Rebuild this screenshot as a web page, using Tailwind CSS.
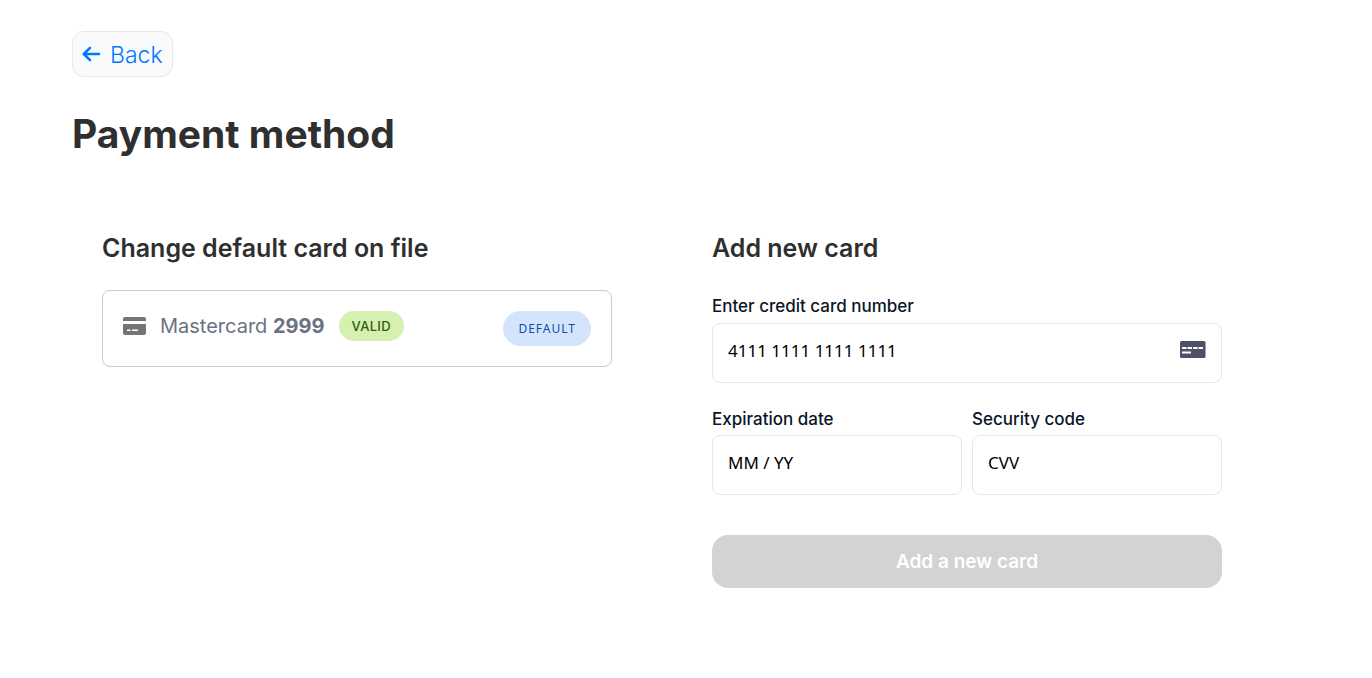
<!DOCTYPE html>
<html lang="en">
<head>
  <meta charset="UTF-8">
  <meta name="viewport" content="width=device-width, initial-scale=1.0">
  <title>Payment method</title>
  <script src="https://cdn.jsdelivr.net/npm/@tailwindcss/browser@4"></script>
</head>
<body class="bg-white font-['Inter',sans-serif] text-[#2f2f2f]">

  <main class="pl-[72px] pr-20 pt-[31px] pb-10">
    <a href="#" class="inline-flex items-center gap-2 h-[46px] pl-2 pr-[9px] pt-0.5 rounded-xl border border-gray-200 bg-gray-50 text-[#0078ff] text-[23px] font-light">
      <svg class="w-[21px] h-6" viewBox="0 0 21 24" fill="none" stroke="currentColor" stroke-width="2.6" stroke-linecap="round" stroke-linejoin="round" aria-hidden="true">
        <path d="M18 11H3M9 4.800L2.800 11L9 17.200"/>
      </svg>
      Back
    </a>

    <h1 class="mt-8 text-[39px] leading-[50px] font-bold">Payment method</h1>

    <div class="grid grid-cols-2 mt-[73px]">
      <section class="pl-[30px] pr-[70px]">
        <h2 class="text-[25px] leading-8 font-semibold">Change default card on file</h2>
        <div class="flex items-start mt-[26px] px-5 py-5 h-[77px] rounded-lg border border-[#cccccc]">
          <svg class="w-[23px] h-[18px] mt-[6px]" viewBox="0 0 23 18" aria-hidden="true">
            <path fill="#757575" d="M2 0h19A2 2 0 0 1 23 2V4H0V2A2 2 0 0 1 2 0zM0 7h23v9a2 2 0 0 1-2 2h-19A2 2 0 0 1 0 16z"/>
            <path stroke="#ffffff" stroke-width="1.4" d="M4 13.300h3.500M9 13.300h6"/>
          </svg>
          <p class="ml-[14px] text-xl leading-[30px] text-gray-500">Mastercard <b class="font-bold">2999</b></p>
          <span class="ml-[14px] px-[13px] rounded-full bg-[#d6f0b1] text-[#2f5e0c] text-[13px] leading-[30px] font-medium tracking-wide">VALID</span>
          <span class="ml-auto px-[15px] rounded-full bg-[#d4e4fc] text-[#0d4eae] text-xs leading-[35px] font-['Noto_Sans',sans-serif] tracking-[1px]">DEFAULT</span>
        </div>
      </section>

      <section class="pl-[30px] pr-[70px]">
        <h2 class="text-[25px] leading-8 font-semibold">Add new card</h2>
        <form class="mt-[29px] text-[#0b1527]">
          <label for="number" class="block text-[17px] leading-[26px] font-medium">Enter credit card number</label>
          <div class="relative mt-1">
            <input id="number" type="text" inputmode="numeric" placeholder="4111 1111 1111 1111" class="w-full h-[60px] px-[15px] pb-[6px] rounded-lg border border-[#e6e6e6] text-[17px] font-['Noto_Sans',sans-serif] placeholder:text-black">
            <svg class="absolute right-4 top-[18px] w-[26px] h-[17px]" viewBox="0 0 26 17" aria-hidden="true">
              <rect width="25.500" height="17" rx="1.500" fill="#4f4f69"/>
              <path stroke="#ffffff" stroke-width="2" d="M2 7h4.500M7.500 7h4.500M13 7h4.500M18.500 7h4.500M2 11.500h9"/>
            </svg>
          </div>

          <div class="grid grid-cols-2 gap-[10px] mt-[23px]">
            <div>
              <label for="expiry" class="block text-[17px] leading-[26px] font-medium">Expiration date</label>
              <input id="expiry" type="text" placeholder="MM / YY" class="w-full h-[60px] mt-[3px] px-[15px] pb-[6px] rounded-lg border border-[#e6e6e6] text-[17px] font-['Noto_Sans',sans-serif] placeholder:text-black">
            </div>
            <div>
              <label for="cvv" class="block text-[17px] leading-[26px] font-medium">Security code</label>
              <input id="cvv" type="text" placeholder="CVV" class="w-full h-[60px] mt-[3px] px-[15px] pb-[6px] rounded-lg border border-[#e6e6e6] text-[17px] font-['Noto_Sans',sans-serif] placeholder:text-black">
            </div>
          </div>

          <button type="submit" disabled class="w-full h-[53px] mt-10 pt-0.5 rounded-2xl bg-[#d3d3d3] text-white text-[19px] font-semibold">Add a new card</button>
        </form>
      </section>
    </div>
  </main>

</body>
</html>
